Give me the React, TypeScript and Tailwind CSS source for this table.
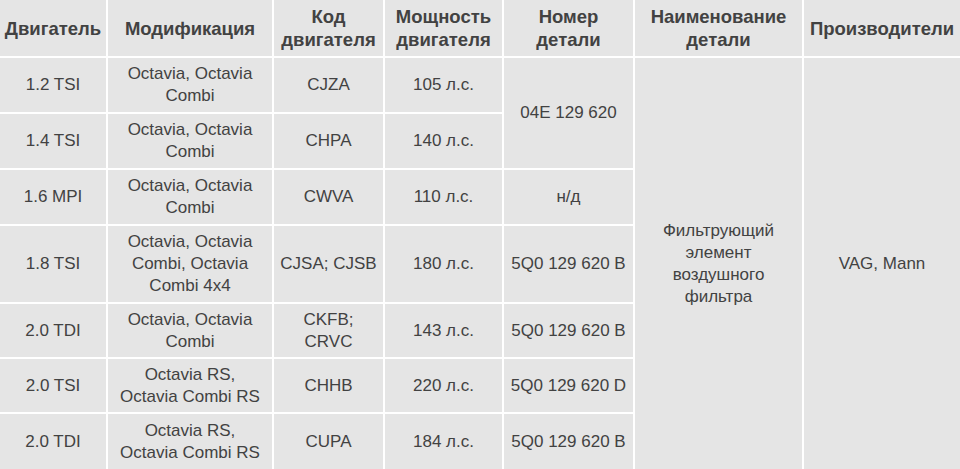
import React from "react";

// ---------------------------------------------------------------------------
// Air filter table for Skoda Octavia engines
// Grid auto-placement fills around the row-spanned cells.
// ---------------------------------------------------------------------------

type Row = {
  engine: string;
  model: string;
  code: string;
  power: string;
  part?: string;
  partSpan?: boolean;
};

const rows: Row[] = [
  { engine: "1.2 TSI", model: "Octavia, Octavia Combi", code: "CJZA", power: "105 л.с.", part: "04E 129 620", partSpan: true },
  { engine: "1.4 TSI", model: "Octavia, Octavia Combi", code: "CHPA", power: "140 л.с." },
  { engine: "1.6 MPI", model: "Octavia, Octavia Combi", code: "CWVA", power: "110 л.с.", part: "н/д" },
  { engine: "1.8 TSI", model: "Octavia, Octavia Combi, Octavia Combi 4x4", code: "CJSA; CJSB", power: "180 л.с.", part: "5Q0 129 620 B" },
  { engine: "2.0 TDI", model: "Octavia, Octavia Combi", code: "CKFB; CRVC", power: "143 л.с.", part: "5Q0 129 620 B" },
  { engine: "2.0 TSI", model: "Octavia RS, Octavia Combi RS", code: "CHHB", power: "220 л.с.", part: "5Q0 129 620 D" },
  { engine: "2.0 TDI", model: "Octavia RS, Octavia Combi RS", code: "CUPA", power: "184 л.с.", part: "5Q0 129 620 B" },
];

const headers = [
  "Двигатель",
  "Модификация",
  "Код двигателя",
  "Мощность двигателя",
  "Номер детали",
  "Наименование детали",
  "Производители",
];

const base = "bg-[#e5e5e5] flex items-center justify-center text-center";
const body = `${base} px-2 text-[17px] leading-[22px]`;
const narrow = `${base} px-1 text-[17px] leading-[22px]`;

export default function App() {
  return (
    <div className="w-[960px] h-[469px] overflow-hidden bg-white text-[#424242] font-['Liberation_Sans',Arial,sans-serif]">
      <div className="grid h-full grid-cols-[106px_164px_109px_117px_129px_167px_1fr] grid-rows-[56px_54px_54px_54px_76px_53px_53px_1fr] gap-[2px]">
        {headers.map((h) => (
          <div
            key={h}
            className={`${base} px-0.5 text-[18.5px] leading-[23px] font-bold`}
          >
            {h}
          </div>
        ))}

        {rows.map((r, i) => (
          <React.Fragment key={i}>
            <div className={body}>{r.engine}</div>
            <div className={body}>{r.model}</div>
            <div className={narrow}>{r.code}</div>
            <div className={body}>{r.power}</div>
            {r.part && (
              <div className={r.partSpan ? `${narrow} row-span-2` : narrow}>
                {r.part}
              </div>
            )}
            {i === 0 && (
              <>
                <div className={`${body} row-span-7 px-6`}>
                  Фильтрующий элемент воздушного фильтра
                </div>
                <div className={`${body} row-span-7`}>VAG, Mann</div>
              </>
            )}
          </React.Fragment>
        ))}
      </div>
    </div>
  );
}
